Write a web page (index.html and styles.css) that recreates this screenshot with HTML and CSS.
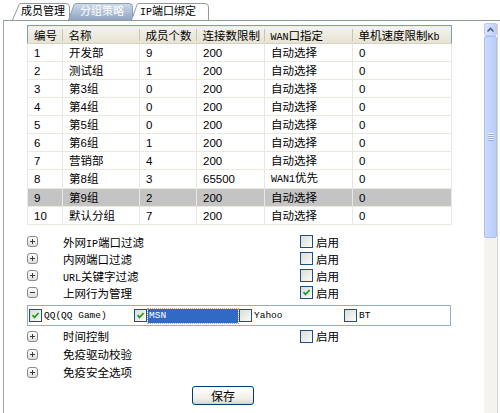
FILE: index.html
```html
<!DOCTYPE html>
<html lang="zh">
<head>
<meta charset="utf-8">
<title>分组策略</title>
<link rel="stylesheet" href="styles.css">
</head>
<body>
<div class="tabs">
  <div class="tab tab1">
    <svg width="58" height="17" viewBox="0 0 58 17"><path d="M0.5 17 L7 1.8 Q7.6 0.5 9 0.5 L54 0.5 Q57.5 0.5 57.5 4 L57.5 17" fill="#fff" stroke="#919b9c"/></svg>
    <span>成员管理</span>
  </div>
  <div class="tab tab2">
    <svg width="65" height="17" viewBox="0 0 65 17"><defs><linearGradient id="tg" x1="0" y1="0" x2="0" y2="1"><stop offset="0" stop-color="#cfdaea"/><stop offset="1" stop-color="#8fa4c2"/></linearGradient></defs><path d="M0.5 17 L6 1.8 Q6.6 0.5 8 0.5 L61 0.5 Q64.5 0.5 64.5 4 L64.5 17" fill="url(#tg)" stroke="#8c9fb8"/></svg>
    <span>分组策略</span>
  </div>
  <div class="tab tab3">
    <svg width="78" height="17" viewBox="0 0 78 17"><path d="M0.5 17 L6 1.8 Q6.6 0.5 8 0.5 L74 0.5 Q77.5 0.5 77.5 4 L77.5 17" fill="#fff" stroke="#919b9c"/></svg>
    <span><span class="en">IP</span>端口绑定</span>
  </div>
</div>
<div class="panel">
  <div class="content">
    <table class="grid">
      <colgroup><col class="c1"><col class="c2"><col class="c3"><col class="c4"><col class="c5"><col class="c6"></colgroup>
      <thead>
        <tr><th>编号</th><th>名称</th><th>成员个数</th><th>连接数限制</th><th><span class="en">WAN</span>口指定</th><th class="last">单机速度限制<span class="en">Kb</span></th></tr>
      </thead>
      <tbody>
        <tr><td>1</td><td>开发部</td><td>9</td><td>200</td><td>自动选择</td><td>0</td></tr>
        <tr><td>2</td><td>测试组</td><td>1</td><td>200</td><td>自动选择</td><td>0</td></tr>
        <tr><td>3</td><td>第3组</td><td>0</td><td>200</td><td>自动选择</td><td>0</td></tr>
        <tr><td>4</td><td>第4组</td><td>0</td><td>200</td><td>自动选择</td><td>0</td></tr>
        <tr><td>5</td><td>第5组</td><td>0</td><td>200</td><td>自动选择</td><td>0</td></tr>
        <tr><td>6</td><td>第6组</td><td>1</td><td>200</td><td>自动选择</td><td>0</td></tr>
        <tr><td>7</td><td>营销部</td><td>4</td><td>200</td><td>自动选择</td><td>0</td></tr>
        <tr><td>8</td><td>第8组</td><td>3</td><td>65500</td><td><span class="en">WAN1</span>优先</td><td>0</td></tr>
        <tr class="sel"><td>9</td><td>第9组</td><td>2</td><td>200</td><td>自动选择</td><td>0</td></tr>
        <tr><td>10</td><td>默认分组</td><td>7</td><td>200</td><td>自动选择</td><td>0</td></tr>
      </tbody>
    </table>

    <div class="opts">
      <div class="opt"><span class="exp plus"></span><span class="lbl">外网<span class="en">IP</span>端口过滤</span><span class="cbl"><span class="cb"></span>启用</span></div>
      <div class="opt"><span class="exp plus"></span><span class="lbl">内网端口过滤</span><span class="cbl"><span class="cb"></span>启用</span></div>
      <div class="opt"><span class="exp plus"></span><span class="lbl"><span class="en">URL</span>关键字过滤</span><span class="cbl"><span class="cb"></span>启用</span></div>
      <div class="opt"><span class="exp minus"></span><span class="lbl">上网行为管理</span><span class="cbl"><span class="cb"><svg width="11" height="11" viewBox="0 0 11 11"><path d="M2.5 5.2 L4.5 7.4 L8.6 3" fill="none" stroke="#21a121" stroke-width="1.8"/></svg></span>启用</span></div>
    </div>

    <div class="behav">
      <span class="bitem"><span class="cb"><svg width="11" height="11" viewBox="0 0 11 11"><path d="M2.5 5.2 L4.5 7.4 L8.6 3" fill="none" stroke="#21a121" stroke-width="1.8"/></svg></span><span class="en">QQ(QQ Game)</span></span>
      <span class="bitem"><span class="cb"><svg width="11" height="11" viewBox="0 0 11 11"><path d="M2.5 5.2 L4.5 7.4 L8.6 3" fill="none" stroke="#21a121" stroke-width="1.8"/></svg></span><span class="en hl">MSN</span></span>
      <span class="bitem"><span class="cb"></span><span class="en">Yahoo</span></span>
      <span class="bitem"><span class="cb"></span><span class="en">BT</span></span>
    </div>

    <div class="opts2">
      <div class="opt tall"><span class="exp plus"></span><span class="lbl">时间控制</span><span class="cbl"><span class="cb"></span>启用</span></div>
      <div class="opt tall"><span class="exp plus"></span><span class="lbl">免疫驱动校验</span></div>
      <div class="opt tall"><span class="exp plus"></span><span class="lbl">免疫安全选项</span></div>
    </div>

    <div class="actions"><button class="btn">保存</button></div>
  </div>
  <div class="vscroll">
    <div class="sb-up"><svg width="11" height="10" viewBox="0 0 11 10"><path d="M2.5 6.5 L5.5 3.5 L8.5 6.5" fill="none" stroke="#4d6185" stroke-width="1.6"/></svg></div>
    <div class="sb-thumb"><span class="grip"></span></div>
    <div class="sb-track"></div>
  </div>
</div>
</body>
</html>
```

FILE: styles.css
```css
* { box-sizing: border-box; }
html, body { margin: 0; padding: 0; }
body {
  width: 500px;
  height: 413px;
  overflow: hidden;
  background: #fff;
  color: #000;
  font: 11.5px "Liberation Sans", "Noto Sans CJK SC", sans-serif;
}
.en { font-family: "Liberation Mono", monospace; font-size: 10px; }

/* tabs */
.tabs {
  display: flex;
  align-items: flex-end;
  height: 20px;
  padding-left: 12px;
}
.tab { position: relative; height: 17px; flex: none; font-size: 11px; }
.tab svg { position: absolute; left: 0; top: 0; display: block; }
.tab > span { position: relative; display: block; line-height: 17px; }
.tab1 { width: 58px; }
.tab1 > span { padding-left: 9px; }
.tab2 { width: 65px; margin-left: -2px; }
.tab2 > span { padding-left: 12px; color: #fff; }
.tab3 { width: 78px; margin-left: -2px; }
.tab3 > span { padding-left: 9px; }

/* panel */
.panel {
  display: flex;
  height: 393px;
  margin-left: 3px;
  border-left: 1px solid #a7a6a0;
  border-top: 1px solid #919b9c;
}
.content {
  width: 480px;
  padding: 4px 0 0 23px;
}

/* table */
.grid {
  width: 424px;
  table-layout: fixed;
  border-collapse: collapse;
  border: 1px solid #7f9db9;
}
.c1 { width: 35px; } .c2 { width: 77px; } .c3 { width: 57px; }
.c4 { width: 68px; } .c5 { width: 88px; } .c6 { width: 99px; }
.grid th {
  height: 18px;
  padding: 0 0 0 6px;
  font-weight: normal;
  text-align: left;
  white-space: nowrap;
  background:
    linear-gradient(#c7c5b2, #c7c5b2) right 3px / 1px 12px no-repeat,
    linear-gradient(#f4f3ec, #e6e3d3);
  border-bottom: 1px solid #d6d2c2;
}
.grid th.last { background: linear-gradient(#f4f3ec, #e6e3d3); }
.grid td {
  height: 18px;
  padding: 0 0 0 6px;
  line-height: 16px;
  white-space: nowrap;
  border: 1px solid #ebe9dd;
}
.grid tr.sel td { background: #c4c4c4; }

/* option rows */
.opts { margin-top: 8px; }
.opts2 { margin-top: 1px; }
.opt {
  display: grid;
  grid-template-columns: 36px 237px auto;
  align-items: center;
  height: 17px;
}
.opt.tall { height: 18px; }
.exp {
  width: 11px;
  height: 11px;
  border: 1px solid #8a8a8a;
  border-radius: 3px;
  background:
    linear-gradient(#3a3a3a, #3a3a3a) center / 5px 1px no-repeat,
    linear-gradient(#3a3a3a, #3a3a3a) center / 1px 5px no-repeat,
    linear-gradient(#fff, #dcdcdc);
}
.exp.minus {
  background:
    linear-gradient(#3a3a3a, #3a3a3a) center / 5px 1px no-repeat,
    linear-gradient(#fff, #dcdcdc);
}
.cbl { display: flex; align-items: center; gap: 3px; }
.cb {
  flex: none;
  width: 13px;
  height: 13px;
  border: 1px solid #1c5180;
  background: linear-gradient(135deg, #dcdcd7, #fbfbf9);
  display: flex;
  align-items: center;
  justify-content: center;
}
.cb svg { display: block; }

/* behaviour box */
.behav {
  display: grid;
  grid-template-columns: repeat(4, 105px);
  align-items: center;
  width: 424px;
  height: 21px;
  margin-top: 4px;
  padding-left: 1px;
  border: 1px solid #95aecb;
}
.bitem { display: flex; align-items: center; gap: 2px; }
.bitem .en { font-size: 9.5px; }
.hl {
  width: 90px;
  height: 14px;
  line-height: 13px;
  padding-left: 1px;
  margin-left: -1px;
  background: #316ac5;
  color: #fff;
  outline: 1px dotted #c9a46b;
}

/* button */
.actions { margin-top: 5px; padding-left: 165px; }
.btn {
  width: 62px;
  height: 19px;
  padding: 0;
  border: 1px solid #003c74;
  border-radius: 3px;
  background: linear-gradient(#fff, #f0efe6 70%, #d8d5c6);
  font: 12px "Liberation Sans", "Noto Sans CJK SC", sans-serif;
  color: #000;
}

/* scrollbar */
.vscroll {
  width: 14px;
  margin-top: 2px;
  display: flex;
  flex-direction: column;
  border-right: 1px solid #d8d6cc;
}
.sb-up {
  height: 13px;
  border: 1px solid #b9cbf3;
  border-radius: 2px;
  background: linear-gradient(90deg, #dbe5fd, #bccffa);
  display: flex;
  align-items: center;
  justify-content: center;
}
.sb-thumb {
  height: 202px;
  border: 1px solid #a9bff2;
  border-radius: 2px;
  background: linear-gradient(90deg, #cbdafc, #b8cdfa);
  display: flex;
  align-items: center;
  justify-content: center;
}
.grip {
  width: 6px;
  height: 8px;
  background: repeating-linear-gradient(#eef3fe 0 1px, #98aede 1px 2px);
}
.sb-track { flex: 1; background: #f4f3ee; }
```
